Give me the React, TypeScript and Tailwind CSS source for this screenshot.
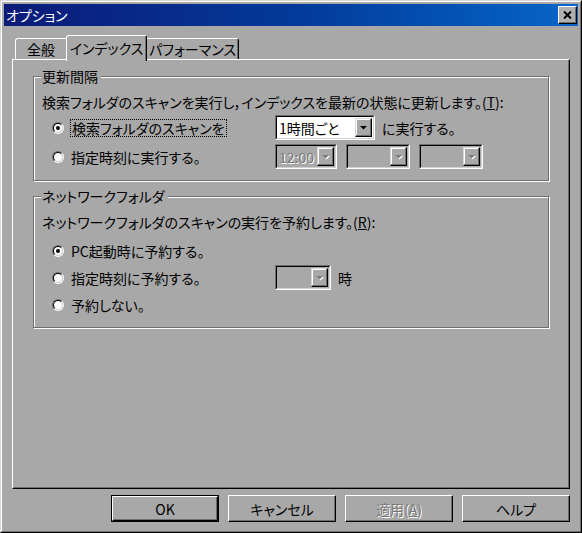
import type { ReactNode } from 'react';

const Radio = ({ checked }: { checked?: boolean }) => (
  <span className="flex h-[12px] w-[12px] shrink-0 items-center justify-center rounded-full border border-t-[#6e6e6e] border-l-[#6e6e6e] border-r-white border-b-white">
    <span className="flex h-[10px] w-[10px] items-center justify-center rounded-full border border-t-black border-l-black border-r-[#d0d0d0] border-b-[#d0d0d0] bg-white">
      {checked && <span className="h-[4px] w-[4px] rounded-full bg-black" />}
    </span>
  </span>
);

const Arrow = ({ disabled }: { disabled?: boolean }) => (
  <span className="flex h-full w-[17px] shrink-0 items-center justify-center border border-t-[#d8d8d8] border-l-[#d8d8d8] border-r-black border-b-black bg-[#a8a8a8] shadow-[inset_-1px_-1px_0_#6e6e6e,inset_1px_1px_0_#ffffff]">
    <svg width="9" height="6" viewBox="0 0 9 6">
      {disabled ? (
        <>
          <polygon points="2,2 9,2 5.5,5.5" fill="#ffffff" />
          <polygon points="1,1 8,1 4.5,4.5" fill="#7a7a7a" />
        </>
      ) : (
        <polygon points="1,1 8,1 4.5,4.5" fill="#000000" />
      )}
    </svg>
  </span>
);

const Combo = ({ width, value, disabled }: { width: string; value?: string; disabled?: boolean }) => (
  <div className={`flex h-[25px] shrink-0 border border-t-[#6e6e6e] border-l-[#6e6e6e] border-r-white border-b-white ${width}`}>
    <div
      className={`flex flex-1 items-stretch border border-t-black border-l-black border-r-[#d0d0d0] border-b-[#d0d0d0] p-px ${
        disabled ? 'bg-[#a8a8a8]' : 'bg-white'
      }`}
    >
      <span
        className={`flex flex-1 items-center pl-px text-[14px] leading-[16px] ${
          disabled ? 'text-[#7a7a7a] [text-shadow:1px_1px_0_#ffffff]' : 'text-black'
        }`}
      >
        {value}
      </span>
      <Arrow disabled={disabled} />
    </div>
  </div>
);

const Group = ({ title, className, children }: { title: string; className: string; children: ReactNode }) => (
  <div
    className={`relative w-[516px] border border-[#6e6e6e] pl-[8px] pt-[14px] pb-[9px] shadow-[inset_1px_1px_0_#ffffff,1px_1px_0_#ffffff] ${className}`}
  >
    <span className="absolute -top-[9px] left-[7px] bg-[#a8a8a8] px-px pr-[3px] text-[14px] leading-[16px]">{title}</span>
    {children}
  </div>
);

const Button = ({ children, isDefault, disabled }: { children: ReactNode; isDefault?: boolean; disabled?: boolean }) => (
  <div className={`h-[27px] w-[108px] ${isDefault ? 'border border-black' : ''}`}>
    <div className="flex h-full w-full items-center justify-center border border-t-white border-l-white border-r-black border-b-black shadow-[inset_-1px_-1px_0_#6e6e6e]">
      <span
        className={`text-[14px] leading-[16px] ${
          disabled ? 'text-[#7a7a7a] [text-shadow:1px_1px_0_#ffffff]' : 'text-black'
        }`}
      >
        {children}
      </span>
    </div>
  </div>
);

export default function App() {
  return (
    <div className="h-[533px] w-[582px] border border-t-[#d8d8d8] border-l-[#d8d8d8] border-r-black border-b-black bg-[#a8a8a8] font-['Noto_Sans_CJK_JP',sans-serif] text-black [font-feature-settings:'palt']">
      <div className="flex h-full flex-col border border-t-white border-l-white border-r-[#6e6e6e] border-b-[#6e6e6e] p-[2px]">
        {/* title bar */}
        <div className="flex h-[22px] shrink-0 items-center justify-between bg-gradient-to-r from-[#0a1a78] via-[#03399a] to-[#0866c8] pl-[2px] pr-[1px]">
          <span className="text-[14px] leading-[16px] text-white">オプション</span>
          <div className="flex h-[18px] w-[19px] items-center justify-center border border-t-white border-l-white border-r-black border-b-black bg-[#b0b0b0] shadow-[inset_-1px_-1px_0_#6e6e6e]">
            <svg width="9" height="8" viewBox="0 0 9 8">
              <path d="M1 0.5 L8 7.5 M8 0.5 L1 7.5" stroke="#000" strokeWidth="2" />
            </svg>
          </div>
        </div>

        <div className="flex flex-1 flex-col px-[8px] pt-[9px]">
          {/* tabs */}
          <div className="flex h-[24px] items-end pl-[3px]">
            <div className="flex h-[21px] w-[51px] items-center justify-center rounded-tl-[3px] border-t border-l border-t-white border-l-white text-[14px] leading-[16px]">
              全般
            </div>
            <div className="relative z-10 -mb-[2px] flex h-[26px] w-[81px] items-start justify-center rounded-t-[3px] border-t border-l border-r border-t-white border-l-white border-r-black bg-[#a8a8a8] pt-[4px] text-[14px] leading-[16px] shadow-[inset_-1px_0_0_#6e6e6e]">
              インデックス
            </div>
            <div className="flex h-[21px] w-[92px] items-center justify-center rounded-tr-[3px] border-t border-r border-t-white border-r-black text-[14px] leading-[16px] shadow-[inset_-1px_0_0_#6e6e6e]">
              パフォーマンス
            </div>
          </div>

          {/* panel */}
          <div className="h-[430px] border border-t-white border-l-white border-r-black border-b-black pl-[20px] pt-[16px] shadow-[inset_-1px_-1px_0_#6e6e6e]">
            <Group title="更新間隔" className="">
              <div className="flex h-[22px] items-center text-[14px] leading-[16px]">
                検索フォルダのスキャンを実行し，インデックスを最新の状態に更新します。(<span className="underline">T</span>):
              </div>
              <div className="ml-[10px] flex h-[29px] items-center">
                <div className="flex w-[223px] items-center">
                  <Radio checked />
                  <span className="ml-[6px] border border-dotted border-black px-px text-[14px] leading-[16px]">
                    検索フォルダのスキャンを
                  </span>
                </div>
                <Combo width="w-[100px]" value="1時間ごと" />
                <span className="ml-[7px] text-[14px] leading-[16px]">に実行する。</span>
              </div>
              <div className="ml-[10px] flex h-[29px] items-center">
                <div className="flex w-[223px] items-center">
                  <Radio />
                  <span className="ml-[7px] text-[14px] leading-[16px]">指定時刻に実行する。</span>
                </div>
                <div className="flex gap-[9px]">
                  <Combo width="w-[62px]" value="12:00" disabled />
                  <Combo width="w-[64px]" disabled />
                  <Combo width="w-[64px]" disabled />
                </div>
              </div>
            </Group>

            <Group title="ネットワークフォルダ" className="mt-[15px]">
              <div className="flex h-[22px] items-center text-[14px] leading-[16px]">
                ネットワークフォルダのスキャンの実行を予約します。(<span className="underline">R</span>):
              </div>
              <div className="ml-[10px] mt-[4px] flex h-[27px] items-center">
                <Radio checked />
                <span className="ml-[7px] text-[14px] leading-[16px]">PC起動時に予約する。</span>
              </div>
              <div className="ml-[10px] flex h-[27px] items-center">
                <div className="flex w-[223px] items-center">
                  <Radio />
                  <span className="ml-[7px] text-[14px] leading-[16px]">指定時刻に予約する。</span>
                </div>
                <Combo width="w-[56px]" disabled />
                <span className="ml-[7px] text-[14px] leading-[16px]">時</span>
              </div>
              <div className="ml-[10px] flex h-[27px] items-center">
                <Radio />
                <span className="ml-[7px] text-[14px] leading-[16px]">予約しない。</span>
              </div>
            </Group>
          </div>

          {/* buttons */}
          <div className="mt-[6px] flex justify-end gap-[9px]">
            <Button isDefault>OK</Button>
            <Button>キャンセル</Button>
            <Button disabled>
              適用(<span className="underline">A</span>)
            </Button>
            <Button>ヘルプ</Button>
          </div>
        </div>
      </div>
    </div>
  );
}
